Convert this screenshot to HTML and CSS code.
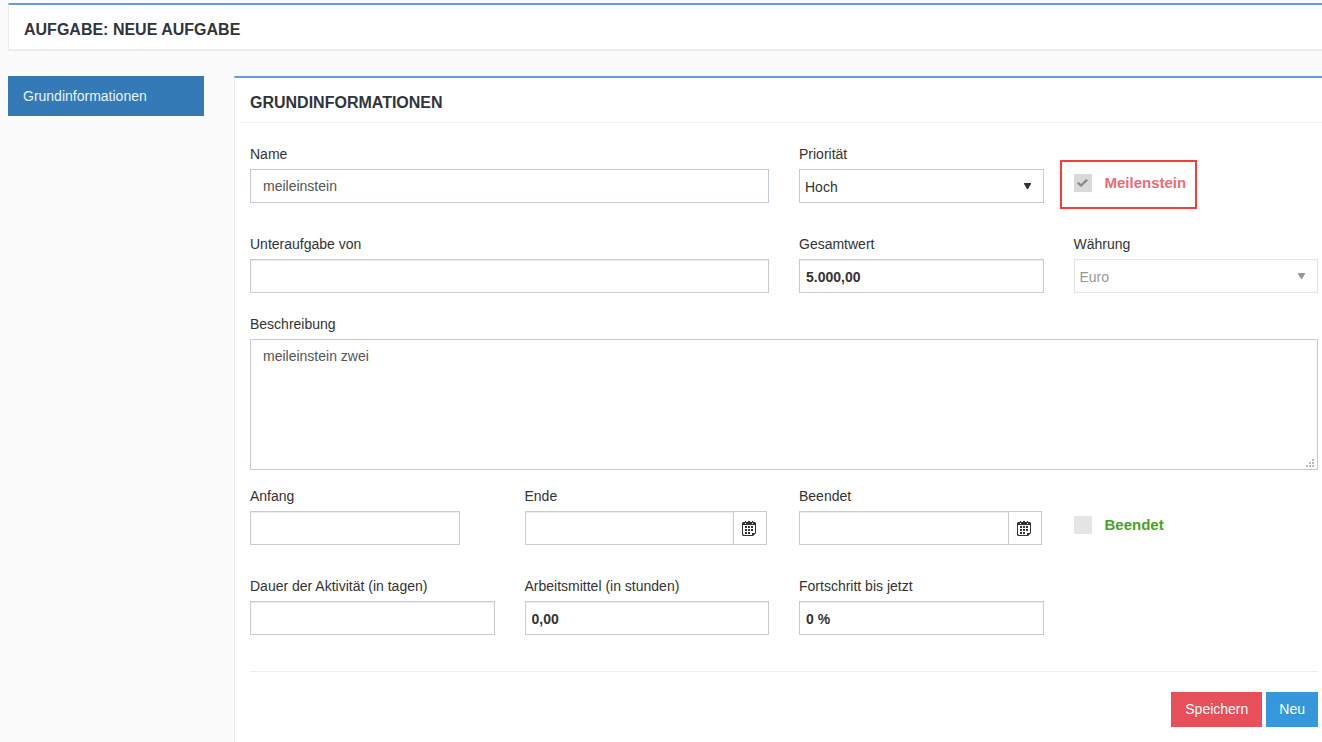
FILE: index.html
```html
<!DOCTYPE html>
<html lang="de">
<head>
<meta charset="utf-8">
<meta name="viewport" content="width=device-width, initial-scale=1">
<title>Aufgabe: Neue Aufgabe</title>
<link rel="stylesheet" href="styles.css">
</head>
<body>
<svg width="0" height="0" class="sprite" aria-hidden="true">
  <symbol id="calendar" viewBox="0 0 14 15">
    <path fill="#333" fill-rule="evenodd" d="M1 1h2V0h1v1h2V0h2v1h2V0h1v1h2l1 1v10l-3 3H1l-1-1V2zM1 4v9l1 1h8v-2h3V4zM3 2v1h1V2zM10 2v1h1V2z"/>
    <path fill="#333" d="M3 5h2v2H3zM6 5h2v2H6zM9 5h2v2H9zM3 8h2v2H3zM6 8h2v2H6zM9 8h2v2H9zM3 11h2v2H3zM6 11h2v2H6z"/>
  </symbol>
  <symbol id="arrow" viewBox="0 0 7 6">
    <path fill="currentColor" d="M0 0h7v1L4 6H3L0 1z"/>
  </symbol>
</svg>

<header class="titlebar">
  <h1 class="heading">AUFGABE: NEUE AUFGABE</h1>
</header>

<div class="layout">
  <nav class="sidenav">
    <a class="sidenav-link" href="#grundinformationen">Grundinformationen</a>
  </nav>

  <main class="panel" id="grundinformationen">
    <div class="panel-head"><h2 class="heading">GRUNDINFORMATIONEN</h2></div>
    <form class="form">
      <div class="row">
        <div class="field span-2">
          <label for="name">Name</label>
          <input class="control text" id="name" type="text" value="meileinstein">
        </div>
        <div class="field">
          <label for="prio">Priorität</label>
          <div class="select">
            <select class="control" id="prio"><option>Hoch</option></select>
            <svg class="arrow"><use href="#arrow"/></svg>
          </div>
        </div>
        <div class="check-cell">
          <label class="check milestone">
            <input type="checkbox" checked>Meilenstein
            <span class="highlight"></span>
          </label>
        </div>
      </div>

      <div class="row row-tight">
        <div class="field span-2">
          <label for="parent">Unteraufgabe von</label>
          <input class="control" id="parent" type="text">
        </div>
        <div class="field">
          <label for="total">Gesamtwert</label>
          <input class="control number" id="total" type="text" value="5.000,00">
        </div>
        <div class="field">
          <label for="currency">Währung</label>
          <div class="select disabled">
            <select class="control" id="currency" disabled><option>Euro</option></select>
            <svg class="arrow"><use href="#arrow"/></svg>
          </div>
        </div>
      </div>

      <div class="row row-text">
        <div class="field span-4">
          <label for="desc">Beschreibung</label>
          <div class="area">
            <textarea class="control text" id="desc">meileinstein zwei</textarea>
            <svg class="grip" viewBox="0 0 8 8"><path fill="#bbb" d="M6 0h2v2H6zM3 3h2v2H3zM6 3h2v2H6zM0 6h2v2H0zM3 6h2v2H3zM6 6h2v2H6z"/></svg>
          </div>
        </div>
      </div>

      <div class="row">
        <div class="field">
          <label for="start">Anfang</label>
          <div class="date"><input class="control" id="start" type="text"></div>
        </div>
        <div class="field">
          <label for="end">Ende</label>
          <div class="date">
            <input class="control" id="end" type="text">
            <button class="date-button" type="button" aria-label="Kalender"><svg><use href="#calendar"/></svg></button>
          </div>
        </div>
        <div class="field">
          <label for="finished">Beendet</label>
          <div class="date">
            <input class="control" id="finished" type="text">
            <button class="date-button" type="button" aria-label="Kalender"><svg><use href="#calendar"/></svg></button>
          </div>
        </div>
        <div class="check-cell">
          <label class="check done"><input type="checkbox">Beendet</label>
        </div>
      </div>

      <div class="row row-last">
        <div class="field">
          <label for="duration">Dauer der Aktivität (in tagen)</label>
          <input class="control" id="duration" type="text">
        </div>
        <div class="field">
          <label for="work">Arbeitsmittel (in stunden)</label>
          <input class="control number" id="work" type="text" value="0,00">
        </div>
        <div class="field">
          <label for="progress">Fortschritt bis jetzt</label>
          <input class="control number" id="progress" type="text" value="0 %">
        </div>
      </div>

      <div class="actions">
        <button class="button save" type="submit">Speichern</button>
        <button class="button new" type="button">Neu</button>
      </div>
    </form>
  </main>
</div>
</body>
</html>
```
FILE: styles.css
```css
* { box-sizing: border-box; }

body {
  display: flex;
  flex-direction: column;
  min-height: 100vh;
  margin: 0;
  padding: 3px 0 0 8px;
  background: #fbfbfb;
  color: #333;
  font: 14px/20px "Liberation Sans", Arial, sans-serif;
}

.sprite { position: absolute; }

.heading {
  margin: 0;
  color: #2f353b;
  font-size: 16px;
  line-height: 20px;
  font-weight: bold;
}

.titlebar {
  padding: 15px 15px 9px;
  border-top: 2px solid #659be0;
  border-left: 1px solid #e7ecf1;
  border-bottom: 2px solid #e9edf1;
  background: #fff;
}

.layout {
  display: flex;
  flex: 1;
  gap: 30px;
  margin-top: 25px;
}

.sidenav { flex: 0 0 196px; }

.sidenav-link {
  display: block;
  padding: 10px 15px;
  background: #337ab7;
  color: #e8f1f8;
  text-decoration: none;
}

.panel {
  flex: 1;
  min-width: 0;
  padding-left: 15px;
  border-top: 2px solid #659be0;
  border-left: 1px solid #e7ecf1;
  background: #fff;
}

.panel-head {
  margin-left: -10px;
  padding: 15px 10px 9px;
  border-bottom: 1px solid #eef1f5;
}

.form { padding: 21px 4px 15px 0; }

.row {
  display: grid;
  grid-template-columns: repeat(4, minmax(0, 1fr));
  column-gap: 30px;
  margin-bottom: 31px;
}

.row-tight { margin-bottom: 21px; }
.row-text { margin-bottom: 16px; }
.row-last { margin-bottom: 36px; }
.span-2 { grid-column: span 2; }
.span-4 { grid-column: span 4; }

.field > label {
  display: block;
  margin-bottom: 5px;
}

.control {
  display: block;
  width: 100%;
  height: 34px;
  margin: 0;
  padding: 7px 6px 5px;
  border: 1px solid #ccc;
  border-radius: 0;
  outline: 0;
  background: #fff;
  box-shadow: inset 0 1px 1px #ececec;
  color: #333;
  font: inherit;
}

.text {
  padding: 6px 12px;
  border-color: #c2cad8;
  box-shadow: none;
  color: #555;
}

.number { font-weight: bold; }

.select, .area { position: relative; }

.select .control {
  appearance: none;
  padding: 7px 30px 5px 5px;
  box-shadow: none;
}

.arrow {
  position: absolute;
  top: 14px;
  right: 13px;
  width: 7px;
  height: 6px;
  color: #333;
  pointer-events: none;
}

.disabled .control {
  border-color: #e5e5e5;
  color: #999;
  opacity: 1;
}

.disabled .arrow { color: #999; }

textarea.control {
  height: 131px;
  resize: none;
}

.grip {
  position: absolute;
  right: 4px;
  bottom: 3px;
  width: 8px;
  height: 8px;
}

.check-cell { padding-top: 30px; }

.check {
  display: flex;
  align-items: center;
  gap: 13px;
  position: relative;
  width: max-content;
  font-size: 15px;
  line-height: 18px;
  font-weight: bold;
}

.check input {
  appearance: none;
  display: grid;
  place-items: center;
  width: 18px;
  height: 18px;
  margin: 0;
  background: #e5e5e5;
}

.check input:checked { background: #d9d9d9; }

.check input:checked::before {
  content: "";
  width: 11px;
  height: 8px;
  background: #888;
  clip-path: polygon(0 55%, 14% 34%, 36% 64%, 85% 0, 100% 18%, 37% 100%);
}

.milestone { color: #ed6b75; }
.done { color: #45a41d; }

.highlight {
  position: absolute;
  inset: -14px -11px -17px -14px;
  border: 2px solid #fb3b37;
  pointer-events: none;
}

.date {
  display: flex;
  margin-right: 2px;
}

.date .control { flex: 0 0 calc(100% - 33px); }

.date-button {
  display: grid;
  place-items: center;
  flex: 0 0 34px;
  height: 34px;
  margin-left: -1px;
  padding: 0 2px 0 0;
  border: 1px solid #ccc;
  background: #fff;
}

.date-button svg {
  width: 14px;
  height: 15px;
}

.actions {
  display: flex;
  justify-content: flex-end;
  gap: 4px;
  padding-top: 20px;
  border-top: 1px solid #eee;
}

.button {
  height: 35px;
  padding: 0 13px 1px;
  border: 0;
  color: #fff;
  font: inherit;
}

.save {
  padding: 0 14px 1px;
  background: #e7505a;
}

.new { background: #3598dc; }
```
